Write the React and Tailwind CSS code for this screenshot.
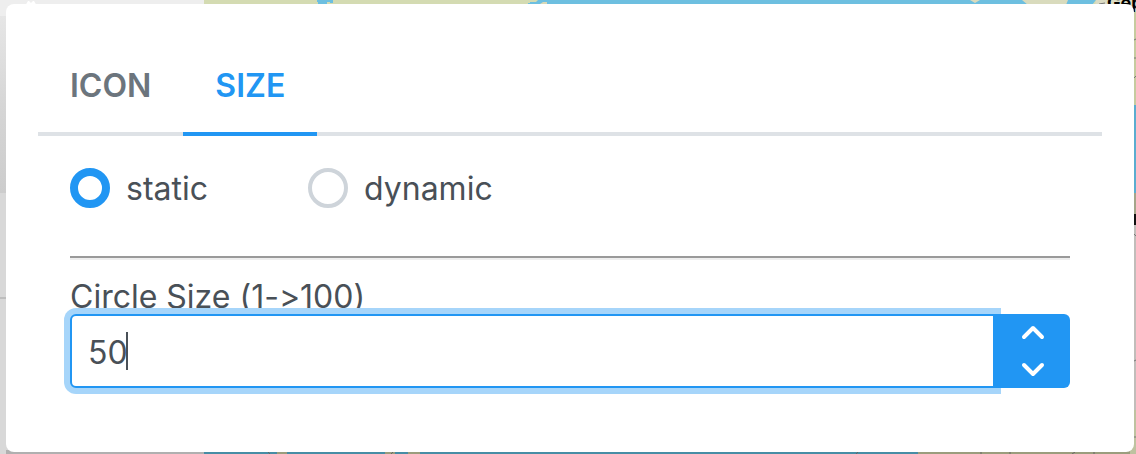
import { useState } from "react";

function Backdrop() {
  return (
    <svg
      aria-hidden="true"
      className="absolute inset-0 h-full w-full"
      viewBox="0 0 1136 454"
      preserveAspectRatio="none"
    >
      <defs>
        <linearGradient id="panel" x1="0" y1="0" x2="0" y2="1">
          <stop offset="0" stopColor="#e6e6e6" />
          <stop offset="0.5" stopColor="#d6d6d6" />
          <stop offset="1" stopColor="#cccccc" />
        </linearGradient>
      </defs>
      <rect width="1136" height="454" fill="#d4dbb2" />
      <rect width="204" height="16" fill="#eeeeee" />
      <rect y="16" width="204" height="177" fill="url(#panel)" />
      <rect y="193" width="204" height="261" fill="#d8d8d8" />
      <rect y="297" width="204" height="2" fill="#bebebe" />
      <path d="M25 6 28 1h1l2 2 2-2h1l3 5z" fill="#fff" />
      <path d="M317 0h16v3h-3v-1h-3v3h-9V2h-1z" fill="#6dbfe0" />
      <path d="M538 0h558l-4 5H528V3h2V2h6z" fill="#6dbfe0" />
      <path d="M543 2h4v2h-7z" fill="#d9d9b8" />
      <path d="M970 0h10l-5 3zM1022 0h46l-2 5h-38z" fill="#d9dbbd" />
      <path d="M1096 0h40v11h-42z" fill="#dcdcc4" />
      <path d="M1099 4l6-1" stroke="#777" />
      <text x="1107" y="9" fontSize="18" fontWeight="700" className="font-[Inter,sans-serif]">
        Gep
      </text>
      <rect x="1134" y="12" width="2" height="93" fill="#c6cb9f" />
      <path d="M1134 40l2-1M1134 58h2M1134 78l2-2" stroke="#777" />
      <rect x="1130" y="105" width="6" height="88" fill="#5aadd0" />
      <rect x="1130" y="193" width="6" height="21" fill="#a5a58a" />
      <rect x="1130" y="214" width="6" height="11" fill="#111" />
      <rect x="1130" y="225" width="6" height="185" fill="#c1bdba" />
      <rect x="1130" y="410" width="6" height="44" fill="#bec2a0" />
      <path d="M1134 234l2 2M1134 361l2-1M1134 437h2" stroke="#777" />
      <rect x="6" y="450" width="198" height="4" fill="#b0b0b0" />
      <rect x="204" y="450" width="714" height="4" fill="#478da5" />
      <path d="M277 450h10v4h-10zM385 450h10v4h-10zM408 450h12v4h-12zM918 450h212v4H918z" fill="#9b9d7d" />
      <path d="M268 452l2 2M393 452l-2 2M858 452l-2 2M981 452v2M1010 452v2M1075 452l-3 2M1094 452v2" stroke="#666" />
    </svg>
  );
}

function Tab({ active, onClick, children }) {
  return (
    <button
      type="button"
      role="tab"
      aria-selected={active}
      onClick={onClick}
      className={
        active
          ? "-mb-1 border-b-4 border-[#2196f3] px-8 pb-7 leading-9 font-semibold text-[#2196f3]"
          : "-mb-1 border-b-4 border-[#dee2e6] px-8 pb-7 leading-9 font-semibold text-[#6c757d]"
      }
    >
      {children}
    </button>
  );
}

function Radio({ label, value, selected, onSelect }) {
  return (
    <label className="flex items-center gap-4">
      <input
        type="radio"
        name="mode"
        value={value}
        checked={selected === value}
        onChange={() => onSelect(value)}
        className="size-10 shrink-0 appearance-none rounded-full border-4 border-[#ced4da] bg-white checked:border-8 checked:border-[#2196f3]"
      />
      <span className="pt-0.5 leading-9">{label}</span>
    </label>
  );
}

function Chevron({ d }) {
  return (
    <svg aria-hidden="true" className="h-7 w-7" viewBox="0 0 28 28" fill="none" stroke="#fff" strokeWidth="4" strokeLinecap="round" strokeLinejoin="round">
      <path d={d} />
    </svg>
  );
}

export default function App() {
  const [tab, setTab] = useState("size");
  const [mode, setMode] = useState("static");
  const [size, setSize] = useState("50");
  const step = (n) => setSize(String(Math.min(100, Math.max(1, (Number(size) || 0) + n))));

  return (
    <div className="relative min-h-screen overflow-hidden pt-1 pr-0.5 pb-0.5 pl-1.5 font-[Inter,sans-serif] text-[32px] text-[#495057] [font-variant-ligatures:no-contextual]">
      <Backdrop />
      <main className="relative rounded-lg bg-white px-8 pt-16 pb-16">
        <div role="tablist" className="mb-1 flex border-b-4 border-[#dee2e6]">
          <Tab active={tab === "icon"} onClick={() => setTab("icon")}>ICON</Tab>
          <Tab active={tab === "size"} onClick={() => setTab("size")}>SIZE</Tab>
        </div>
        <section className="px-8 pt-7">
          <div className="flex gap-[100px]">
            <Radio label="static" value="static" selected={mode} onSelect={setMode} />
            <Radio label="dynamic" value="dynamic" selected={mode} onSelect={setMode} />
          </div>
          <hr className="mt-12 border-t-2 border-b-2 border-t-[#9a9a9a] border-b-[#eeeeee]" />
          <label htmlFor="circle-size" className="block pt-5 leading-[34px]">
            Circle Size (1-&gt;100)
          </label>
          <div className="flex h-[74px]">
            <div className="relative min-w-0 flex-1">
              <input
                id="circle-size"
                inputMode="numeric"
                value={size}
                onChange={(e) => setSize(e.target.value)}
                className="h-full w-full rounded-l-md border-2 border-[#2196f3] bg-white px-4 pt-0.5 caret-transparent ring-6 ring-[#a6d5fa] outline-none"
              />
              <span className="pointer-events-none absolute top-[18px] left-14 h-[38px] w-0.5 bg-[#495057]" />
            </div>
            <div className="relative flex w-[75px] flex-col overflow-hidden rounded-r-md bg-[#2196f3]">
              <button type="button" aria-label="Increase" onClick={() => step(1)} className="flex flex-1 items-center justify-center">
                <Chevron d="M5 18l9-9 9 9" />
              </button>
              <button type="button" aria-label="Decrease" onClick={() => step(-1)} className="flex flex-1 items-center justify-center">
                <Chevron d="M5 9l9 9 9-9" />
              </button>
            </div>
          </div>
        </section>
      </main>
    </div>
  );
}
